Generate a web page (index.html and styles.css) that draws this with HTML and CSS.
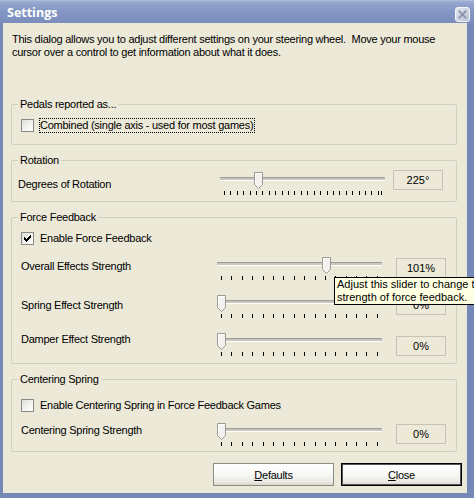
FILE: index.html
```html
<!DOCTYPE html>
<html>
<head>
<meta charset="utf-8">
<title>Settings</title>
<link rel="stylesheet" href="styles.css">
</head>
<body>
<div class="window">
  <div class="titlebar">
    <span class="title">Settings</span>
    <span class="close-btn">
      <svg width="15" height="15" viewBox="0 0 15 15">
        <defs>
          <linearGradient id="cg" x1="0" y1="0" x2="1" y2="1">
            <stop offset="0" stop-color="#e4e8f1"/>
            <stop offset="1" stop-color="#b9c2d6"/>
          </linearGradient>
        </defs>
        <rect x="0.5" y="0.5" width="14" height="14" rx="2.5" fill="url(#cg)" stroke="#f4f6fa"/>
        <path d="M4.5 4.5 L10.5 10.5 M10.5 4.5 L4.5 10.5" stroke="#8d98b0" stroke-width="2" stroke-linecap="square"/>
      </svg>
    </span>
  </div>
  <div class="frame">
    <div class="client">
      <p class="intro">This dialog allows you to adjust different settings on your steering wheel.&nbsp; Move your mouse<br>cursor over a control to get information about what it does.</p>

      <fieldset class="group g-pedals">
        <legend>Pedals reported as...</legend>
        <div class="body">
          <div class="check-row">
            <span class="checkbox"></span>
            <span class="check-label focus">Combined (single axis - used for most games)</span>
          </div>
        </div>
      </fieldset>

      <fieldset class="group g-rotation">
        <legend>Rotation</legend>
        <div class="body">
          <div class="slider-row">
            <span class="label">Degrees of Rotation</span>
            <div class="slider">
              <div class="track"></div>
              <span class="thumb" style="left:34px"><svg width="9" height="17" viewBox="0 0 9 17"><path d="M0.5 0.5 H8.5 V12.5 L4.5 16.5 L0.5 12.5 Z" fill="#f3f2ee" stroke="#9a9a96"/><path d="M1.5 12 V1.5 H7.5" fill="none" stroke="#fff"/></svg></span>
              <div class="ticks rot">
                <div class="tick-run">
                  <i class="tick"></i><i class="tick"></i><i class="tick"></i><i class="tick"></i><i class="tick"></i>
                  <i class="tick"></i><i class="tick"></i><i class="tick"></i><i class="tick"></i><i class="tick"></i>
                  <i class="tick"></i><i class="tick"></i><i class="tick"></i><i class="tick"></i><i class="tick"></i>
                  <i class="tick"></i><i class="tick"></i><i class="tick"></i><i class="tick"></i><i class="tick"></i>
                  <i class="tick"></i><i class="tick"></i><i class="tick"></i><i class="tick"></i><i class="tick"></i>
                </div>
                <i class="tick end"></i>
              </div>
            </div>
            <span class="value">225°</span>
          </div>
        </div>
      </fieldset>

      <fieldset class="group g-force">
        <legend>Force Feedback</legend>
        <div class="body">
          <div class="check-row">
            <span class="checkbox checked"><svg width="7" height="7" viewBox="0 0 7 7"><path d="M6 0h1v3h-1zM5 1h1v3h-1zM4 2h1v3h-1zM3 3h1v3h-1zM2 4h1v3h-1zM1 3h1v3h-1zM0 2h1v3h-1z" fill="#000"/></svg></span>
            <span class="check-label">Enable Force Feedback</span>
          </div>

          <div class="slider-row r-overall">
            <span class="label">Overall Effects Strength</span>
            <div class="slider">
              <div class="track"></div>
              <span class="thumb" style="left:105px"><svg width="9" height="17" viewBox="0 0 9 17"><path d="M0.5 0.5 H8.5 V12.5 L4.5 16.5 L0.5 12.5 Z" fill="#f3f2ee" stroke="#9a9a96"/><path d="M1.5 12 V1.5 H7.5" fill="none" stroke="#fff"/></svg></span>
              <div class="ticks">
                <i class="tick"></i><i class="tick"></i><i class="tick"></i><i class="tick"></i>
                <i class="tick"></i><i class="tick"></i><i class="tick"></i><i class="tick"></i>
                <i class="tick"></i><i class="tick"></i><i class="tick"></i><i class="tick"></i>
                <i class="tick"></i><i class="tick"></i><i class="tick"></i><i class="tick"></i>
              </div>
            </div>
            <span class="value">101%</span>
          </div>

          <div class="slider-row r-spring">
            <span class="label">Spring Effect Strength</span>
            <div class="slider">
              <div class="track"></div>
              <span class="thumb" style="left:0px"><svg width="9" height="17" viewBox="0 0 9 17"><path d="M0.5 0.5 H8.5 V12.5 L4.5 16.5 L0.5 12.5 Z" fill="#f3f2ee" stroke="#9a9a96"/><path d="M1.5 12 V1.5 H7.5" fill="none" stroke="#fff"/></svg></span>
              <div class="ticks">
                <i class="tick"></i><i class="tick"></i><i class="tick"></i><i class="tick"></i>
                <i class="tick"></i><i class="tick"></i><i class="tick"></i><i class="tick"></i>
                <i class="tick"></i><i class="tick"></i><i class="tick"></i><i class="tick"></i>
                <i class="tick"></i><i class="tick"></i><i class="tick"></i><i class="tick"></i>
              </div>
            </div>
            <span class="value">0%</span>
          </div>

          <div class="slider-row r-damper">
            <span class="label">Damper Effect Strength</span>
            <div class="slider">
              <div class="track"></div>
              <span class="thumb" style="left:0px"><svg width="9" height="17" viewBox="0 0 9 17"><path d="M0.5 0.5 H8.5 V12.5 L4.5 16.5 L0.5 12.5 Z" fill="#f3f2ee" stroke="#9a9a96"/><path d="M1.5 12 V1.5 H7.5" fill="none" stroke="#fff"/></svg></span>
              <div class="ticks">
                <i class="tick"></i><i class="tick"></i><i class="tick"></i><i class="tick"></i>
                <i class="tick"></i><i class="tick"></i><i class="tick"></i><i class="tick"></i>
                <i class="tick"></i><i class="tick"></i><i class="tick"></i><i class="tick"></i>
                <i class="tick"></i><i class="tick"></i><i class="tick"></i><i class="tick"></i>
              </div>
            </div>
            <span class="value">0%</span>
          </div>
        </div>
      </fieldset>

      <fieldset class="group g-center">
        <legend>Centering Spring</legend>
        <div class="body">
          <div class="check-row">
            <span class="checkbox"></span>
            <span class="check-label">Enable Centering Spring in Force Feedback Games</span>
          </div>
          <div class="slider-row r-centering">
            <span class="label">Centering Spring Strength</span>
            <div class="slider">
              <div class="track"></div>
              <span class="thumb" style="left:0px"><svg width="9" height="17" viewBox="0 0 9 17"><path d="M0.5 0.5 H8.5 V12.5 L4.5 16.5 L0.5 12.5 Z" fill="#f3f2ee" stroke="#9a9a96"/><path d="M1.5 12 V1.5 H7.5" fill="none" stroke="#fff"/></svg></span>
              <div class="ticks">
                <i class="tick"></i><i class="tick"></i><i class="tick"></i><i class="tick"></i>
                <i class="tick"></i><i class="tick"></i><i class="tick"></i><i class="tick"></i>
                <i class="tick"></i><i class="tick"></i><i class="tick"></i><i class="tick"></i>
                <i class="tick"></i><i class="tick"></i><i class="tick"></i><i class="tick"></i>
              </div>
            </div>
            <span class="value">0%</span>
          </div>
        </div>
      </fieldset>

      <div class="buttons">
        <button class="btn"><u>D</u>efaults</button>
        <button class="btn default"><u>C</u>lose</button>
      </div>
    </div>
  </div>
</div>
<div class="tooltip">Adjust this slider to change the<br>strength of force feedback.</div>
</body>
</html>
```

FILE: styles.css
```css
* { box-sizing: border-box; }

html, body {
  margin: 0;
  padding: 0;
}

body {
  width: 474px;
  height: 498px;
  overflow: hidden;
  position: relative;
  font-family: "Liberation Sans", Arial, sans-serif;
  font-size: 11px;
  line-height: 13px;
  letter-spacing: -0.25px;
  color: #000;
  background: #ece9d8;
}

.window {
  width: 474px;
  height: 498px;
  display: flex;
  flex-direction: column;
}

.titlebar {
  height: 23px;
  flex: none;
  display: flex;
  align-items: flex-start;
  padding-left: 7px;
  background: linear-gradient(to bottom, #b3c0de 0, #97a8d0 2px, #8597c4 45%, #7a8dbb 100%);
}

.title {
  font-family: "Open Sans", "Liberation Sans", sans-serif;
  font-weight: 700;
  font-size: 12.5px;
  line-height: 16px;
  letter-spacing: 0;
  color: #fff;
  padding-top: 5px;
}

.close-btn {
  margin-left: auto;
  margin-right: 4px;
  margin-top: 7px;
  width: 15px;
  height: 15px;
  display: block;
}
.close-btn svg { display: block; }

.frame {
  flex: 1;
  display: flex;
  border-left: 3px solid #7489b7;
  border-right: 7px solid #7489b7;
  border-bottom: 5px solid #7489b7;
}

.client {
  flex: 1;
  background: #ece9d8;
  padding: 10px 5px 0 8px;
  display: flex;
  flex-direction: column;
}

.intro {
  margin: 0 0 39px 1px;
}

.group {
  margin: 0 5px 0 0;
  padding: 0;
  border: 1px solid #d0d0bf;
  border-radius: 2px;
  min-width: 0;
}

.group legend {
  margin-left: 6px;
  padding: 0 2px;
  line-height: 13px;
}

.g-rotation, .g-force, .g-center { margin-top: 9px; }

.g-pedals .body { padding: 7px 0 11px 9px; }
.g-rotation .body { padding: 3px 13px 5px 6px; }
.g-force .body { padding: 7px 10px 6px 9px; }
.g-center .body { padding: 12px 10px 4px 9px; }

.check-row {
  display: flex;
  align-items: center;
  height: 15px;
}

.checkbox {
  width: 13px;
  height: 13px;
  flex: none;
  border: 1px solid #8a8a86;
  background: linear-gradient(135deg, #dcdcd6 0%, #f4f4f1 60%, #ffffff 100%);
  display: flex;
  align-items: center;
  justify-content: center;
}
.checkbox svg { display: block; }

.check-label { margin-left: 6px; white-space: nowrap; }
.check-label.focus {
  margin-left: 5px;
  border: 1px dotted #000;
  padding: 0 1px 0 0;
  line-height: 13px;
}

.slider-row {
  display: flex;
  align-items: flex-start;
}

.slider-row .label {
  flex: 1;
  white-space: nowrap;
  margin-top: 8px;
}

.slider {
  position: relative;
  width: 165px;
  height: 24px;
  flex: none;
  margin-top: 2px;
}

.track {
  margin-top: 5px;
  height: 4px;
  border-top: 1px solid #9d9d98;
  border-bottom: 1px solid #ffffff;
  background: #c9c7bd;
  border-radius: 1px;
}

.thumb {
  position: absolute;
  top: 0;
  width: 9px;
  height: 17px;
}
.thumb svg { display: block; }

.ticks {
  margin-top: 10px;
  height: 4px;
  padding: 0 4px;
  display: flex;
  justify-content: space-between;
}

.ticks.rot { justify-content: flex-start; padding-right: 0; }

.tick-run {
  width: 155px;
  display: flex;
  justify-content: space-between;
}

.tick {
  display: block;
  width: 1px;
  height: 4px;
  background: #000;
}
.tick.end { margin-left: 2px; }

.value {
  flex: none;
  width: 50px;
  height: 20px;
  margin-left: 8px;
  border: 1px solid #c5c2b3;
  display: flex;
  align-items: center;
  justify-content: center;
  letter-spacing: 0;
}

.g-force .value, .g-center .value { margin-left: 14px; }

.r-overall { margin-top: 11px; }
.r-overall .slider { margin-top: 0; }
.r-overall .value { margin-top: 1px; }
.r-overall .label { margin-top: 3px; }

.r-spring { margin-top: 14px; }
.r-spring .slider { margin-top: 0; }
.r-spring .value { margin-top: 0; }
.r-spring .label { margin-top: 4px; }

.r-damper { margin-top: 14px; }
.r-damper .slider { margin-top: 0; }
.r-damper .value { margin-top: 3px; }
.r-damper .label { margin-top: 0; }

.r-centering { margin-top: 10px; }
.r-centering .slider { margin-top: 0; }
.r-centering .value { margin-top: 1px; }
.r-centering .label { margin-top: 1px; }

.buttons {
  margin-top: 11px;
  display: flex;
  justify-content: flex-end;
  gap: 7px;
}

.btn {
  width: 121px;
  height: 23px;
  margin: 0;
  padding: 0;
  font-family: inherit;
  font-size: 11px;
  letter-spacing: -0.25px;
  color: #000;
  border: 1px solid #8c8b86;
  border-radius: 0;
  background: linear-gradient(to bottom, #ffffff 0%, #f7f7f3 55%, #e9e8e1 85%, #d9d7cc 100%);
}

.btn.default {
  border: 1px solid #000;
  box-shadow: inset 0 0 0 1px #555;
}

.tooltip {
  position: absolute;
  left: 334px;
  top: 277px;
  background: #ffffe1;
  border: 1px solid #000;
  padding: 0 2px;
  line-height: 13px;
  white-space: nowrap;
  letter-spacing: 0;
}
```
